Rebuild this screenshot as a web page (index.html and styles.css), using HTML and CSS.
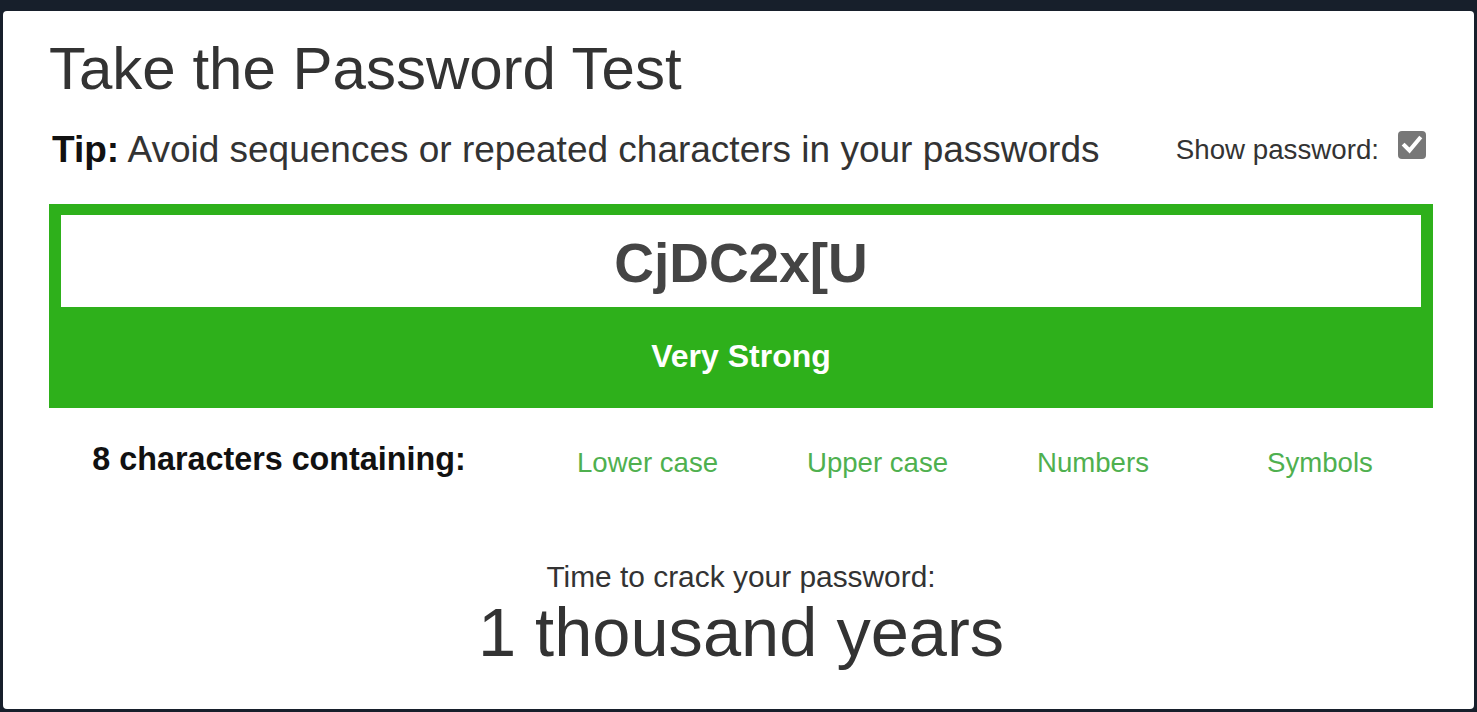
FILE: index.html
```html
<!DOCTYPE html>
<html lang="en">

<head>
    <meta charset="UTF-8">
    <meta name="viewport" content="width=device-width, initial-scale=1.0">
    <title>Take the Password Test</title>
    <link rel="stylesheet" href="styles.css">
</head>

<body>

    <div class="card">
        <h1 class="title">Take the Password Test</h1>

        <div class="tip-row">
            <p class="tip"><strong>Tip:</strong> Avoid sequences or repeated characters in your passwords</p>
            <label class="show-toggle">
                <span class="show-label">Show password:</span>
                <span class="checkbox">
                    <svg width="28" height="28" viewBox="0 0 28 28">
                        <polyline points="6.5,14.5 11.5,19.5 21.5,7.5" fill="none" stroke="#fff" stroke-width="4" stroke-linecap="square"/>
                    </svg>
                </span>
            </label>
        </div>

        <div class="meter">
            <input class="password" type="text" value="CjDC2x[U">
            <div class="strength">Very Strong</div>
        </div>

        <div class="criteria">
            <div class="criteria-label">8 characters containing:</div>
            <div class="criteria-item">Lower case</div>
            <div class="criteria-item">Upper case</div>
            <div class="criteria-item">Numbers</div>
            <div class="criteria-item">Symbols</div>
        </div>

        <div class="crack">
            <div class="crack-label">Time to crack your password:</div>
            <div class="crack-time">1 thousand years</div>
        </div>
    </div>

</body>

</html>
```

FILE: styles.css
```css
body {
    font-family: "Liberation Sans", Arial, sans-serif;
    margin: 0;
    padding: 0;
    background-color: #171f2b;
}

.card {
    margin: 11px 3px 3px 3px;
    height: 698px;
    padding: 0 41px 0 46px;
    background-color: #fff;
    border-radius: 4px;
    box-sizing: border-box;
    overflow: hidden;
}

.title {
    margin: 25px 0 0 0;
    font-size: 60px;
    line-height: 66px;
    font-weight: normal;
    color: #333;
}

/* tip + show password */
.tip-row {
    display: flex;
    justify-content: space-between;
    align-items: flex-start;
    margin-top: 26px;
}

.tip {
    margin: 0 0 0 3px;
    font-size: 37px;
    line-height: 44px;
    color: #333;
}

.tip strong {
    color: #111;
}

.show-toggle {
    display: flex;
    align-items: flex-start;
    gap: 19px;
    margin-top: 3px;
    margin-right: 7px;
}

.show-label {
    margin-top: 3px;
    font-size: 27.7px;
    line-height: 32px;
    color: #333;
}

.checkbox {
    width: 28px;
    height: 28px;
    border-radius: 4px;
    background-color: #777;
}

.checkbox svg {
    display: block;
}

/* strength meter */
.meter {
    margin-top: 32px;
    padding: 11px 12px 0 12px;
    background-color: #2eb01b;
}

.password {
    display: block;
    width: 100%;
    height: 92px;
    padding: 3px 0 0 0;
    margin: 0;
    border: none;
    outline: none;
    box-sizing: border-box;
    background-color: #fff;
    font-family: "Liberation Sans", Arial, sans-serif;
    font-size: 55px;
    font-weight: bold;
    color: #444;
    text-align: center;
}

.strength {
    height: 101px;
    line-height: 99px;
    font-size: 32px;
    font-weight: bold;
    color: #fff;
    text-align: center;
}

/* criteria */
.criteria {
    display: grid;
    grid-template-columns: 460px repeat(4, 230px);
    margin-top: 31px;
}

.criteria-label {
    font-size: 32.3px;
    line-height: 40px;
    font-weight: bold;
    color: #111;
    text-align: center;
}

.criteria-item {
    padding: 4px 0 0 68px;
    font-size: 27.6px;
    line-height: 40px;
    color: #4fb04f;
}

/* crack time */
.crack {
    margin-top: 77px;
    text-align: center;
    color: #333;
}

.crack-label {
    font-size: 29.9px;
    line-height: 34px;
}

.crack-time {
    font-size: 68.6px;
    line-height: 77px;
}
```
